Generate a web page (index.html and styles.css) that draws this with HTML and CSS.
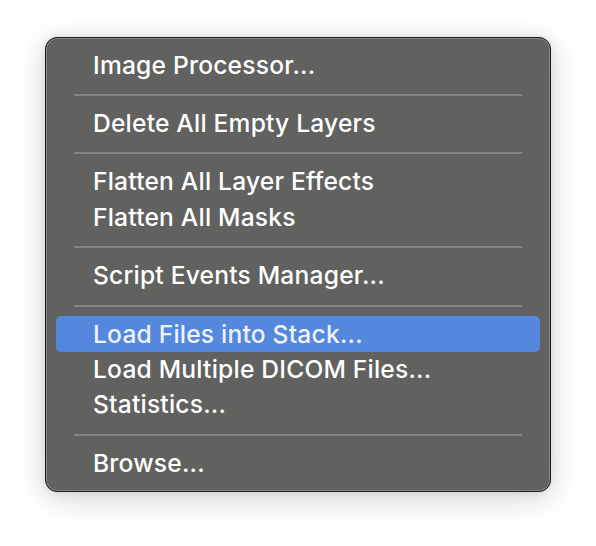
FILE: index.html
```html
<!DOCTYPE html>
<html>
<head>
<meta charset="utf-8">
<link rel="stylesheet" href="styles.css">
</head>
<body>
<div class="menu">
  <div class="item">Image Processor...</div>
  <div class="sep"></div>
  <div class="item">Delete All Empty Layers</div>
  <div class="sep"></div>
  <div class="item">Flatten All Layer Effects</div>
  <div class="item">Flatten All Masks</div>
  <div class="sep"></div>
  <div class="item">Script Events Manager...</div>
  <div class="sep"></div>
  <div class="item active">Load Files into Stack...</div>
  <div class="item">Load Multiple DICOM Files...</div>
  <div class="item">Statistics...</div>
  <div class="sep"></div>
  <div class="item">Browse...</div>
</div>
</body>
</html>
```
FILE: styles.css
```css
html, body {
  margin: 0;
  padding: 0;
  background: #ffffff;
}
body {
  width: 596px;
  height: 546px;
  overflow: hidden;
}
.menu {
  box-sizing: border-box;
  margin: 37px 0 0 45px;
  width: 506px;
  height: 455px;
  padding: 9px 10px 0 10px;
  background: #616160;
  border: 1px solid #1e1e1e;
  border-radius: 12px;
  box-shadow: inset 0 0 0 1px #858584, 0 6px 30px rgba(0, 0, 0, 0.18), 0 0 8px rgba(0,0,0,0.08);
  font-family: Inter, "Liberation Sans", sans-serif;
  font-size: 24.6px;
  font-weight: 500;
  letter-spacing: 0.2px;
  color: #ffffff;
}
.item {
  box-sizing: border-box;
  height: 35.3px;
  padding-top: 1.5px;
  padding-left: 37px;
  border-radius: 5px;
  white-space: nowrap;
  line-height: 33.8px;
}
.item.active {
  background: #5587dc;
  color: #eef3fc;
}
.sep {
  height: 23.2px;
  display: flex;
  align-items: center;
  padding: 0 18px;
}
.sep::before {
  content: "";
  display: block;
  flex: 1;
  height: 2px;
  margin-top: 2px;
  background: #858584;
}
```
